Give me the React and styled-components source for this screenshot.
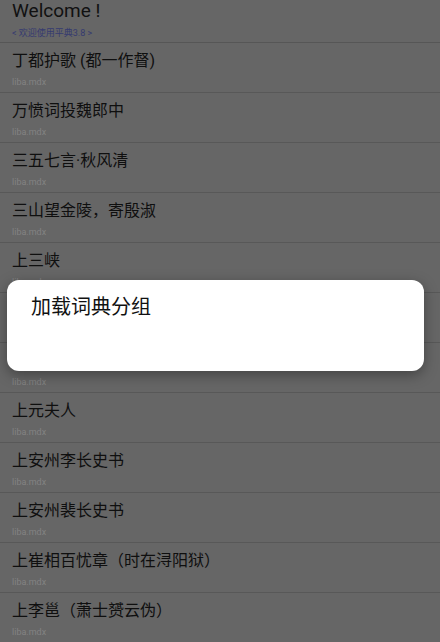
import React from "react";
import styled, { createGlobalStyle } from "styled-components";

const Global = createGlobalStyle`
  html, body {
    margin: 0;
    padding: 0;
    background: #666666;
  }
  body {
    font-family: Roboto, "Noto Sans CJK SC", sans-serif;
    overflow: hidden;
  }
`;

const Page = styled.div`
  width: 440px;
  height: 642px;
  background: #666666;
  display: flex;
  flex-direction: column;
  overflow: hidden;
`;

const Header = styled.div`
  height: 43px;
  flex-shrink: 0;
  box-sizing: border-box;
  padding: 0 12px;
  border-bottom: 1px solid #565656;
  display: flex;
  flex-direction: column;
`;

const Welcome = styled.div`
  font-size: 19px;
  line-height: 22px;
  color: #111111;
`;

const Version = styled.div`
  margin-top: 5px;
  font-size: 9px;
  line-height: 12px;
  color: #353a70;
`;

const Row = styled.div`
  height: 50px;
  flex-shrink: 0;
  box-sizing: border-box;
  padding: 7px 12px 0;
  border-bottom: 1px solid #585858;
  display: flex;
  flex-direction: column;
`;

const Title = styled.div`
  font-size: 16px;
  line-height: 22px;
  color: #0f0f0f;
  white-space: nowrap;
`;

const Source = styled.div`
  margin-top: 4px;
  font-family: Roboto, sans-serif;
  font-size: 9px;
  line-height: 12px;
  color: #838383;
`;

const Dialog = styled.div`
  position: absolute;
  left: 7px;
  top: 280px;
  width: 417px;
  height: 91px;
  box-sizing: border-box;
  padding: 13px 24px;
  background: #ffffff;
  border-radius: 12px;
  box-shadow: 0 4px 14px rgba(0, 0, 0, 0.35);
`;

const DialogText = styled.div`
  font-size: 20px;
  line-height: 28px;
  color: #111111;
`;

const entries = [
  "丁都护歌 (都一作督)",
  "万愤词投魏郎中",
  "三五七言·秋风清",
  "三山望金陵，寄殷淑",
  "上三峡",
  "上之回",
  "上云乐",
  "上元夫人",
  "上安州李长史书",
  "上安州裴长史书",
  "上崔相百忧章（时在浔阳狱）",
  "上李邕（萧士赟云伪）",
];

export default function App() {
  return (
    <>
      <Global />
      <Page>
        <Header>
          <Welcome>Welcome !</Welcome>
          <Version>&lt; 欢迎使用平典3.8 &gt;</Version>
        </Header>
        {entries.map((t) => (
          <Row key={t}>
            <Title>{t}</Title>
            <Source>liba.mdx</Source>
          </Row>
        ))}
      </Page>
      <Dialog>
        <DialogText>加载词典分组</DialogText>
      </Dialog>
    </>
  );
}
